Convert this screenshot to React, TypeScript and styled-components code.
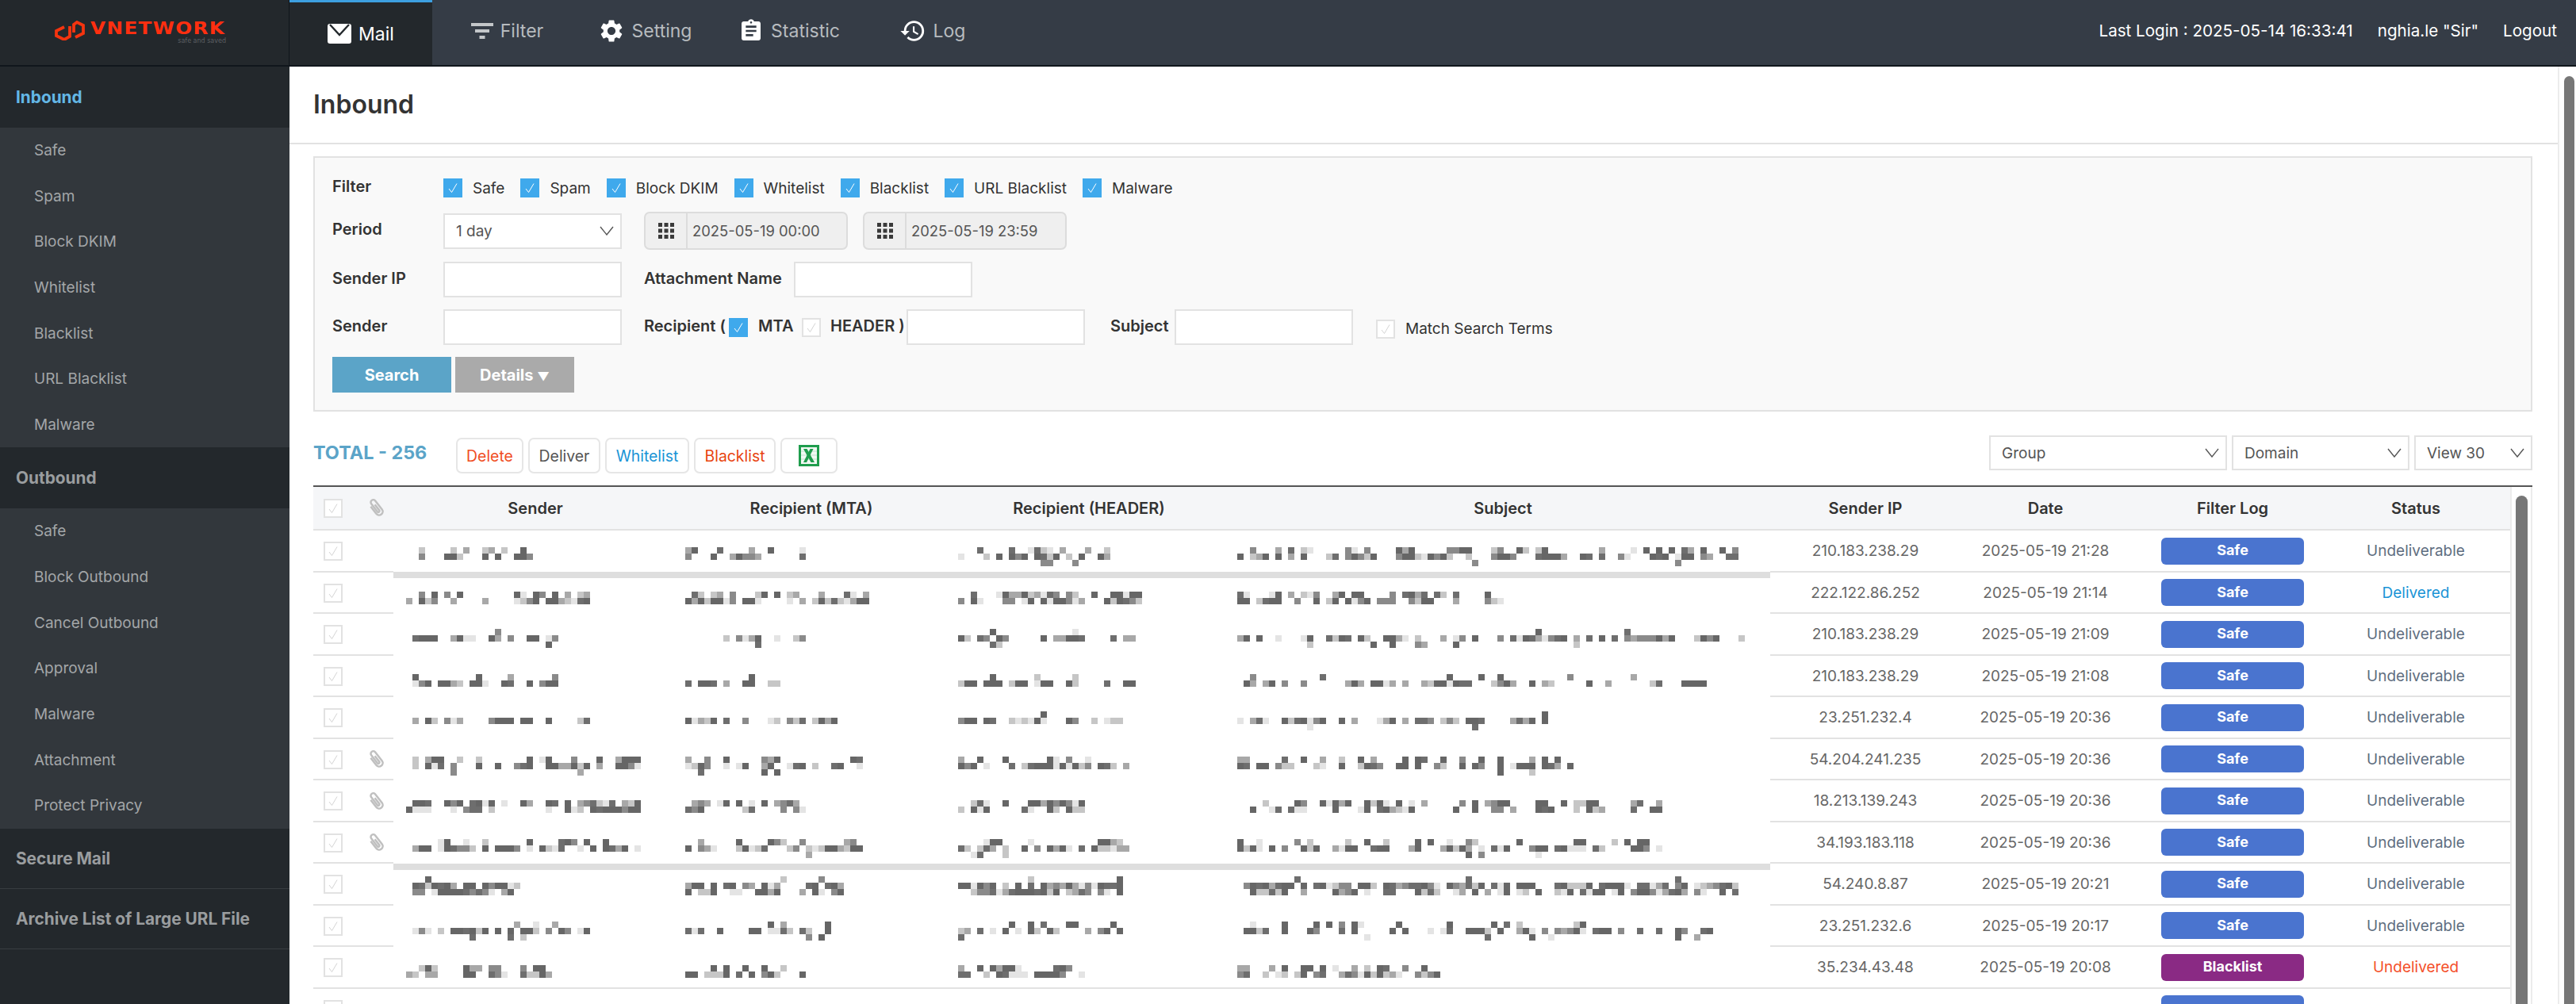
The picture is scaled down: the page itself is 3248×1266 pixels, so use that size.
import React from "react";
import styled, {createGlobalStyle} from "styled-components";
import {MdAssignment, MdHistory, MdSettings} from "react-icons/md";

const GlobalStyle = createGlobalStyle`
    html, body {
        margin: 0;
        padding: 0;
        background: #ffffff;
    }

    * {
        box-sizing: border-box;
    }

    body {
        font-family: Inter, "Noto Sans", "Liberation Sans", sans-serif;
        font-size: 20px;
        color: #333333;
    }
`;

const SPage = styled.div`
    width: 3248px;
    height: 1266px;
    overflow: hidden;
    display: flex;
    flex-direction: column;
`;

const STopBar = styled.header`
    height: 84px;
    flex: none;
    display: flex;
    background: #353c46;
    border-bottom: 2px solid #10161c;
`;

const SLogoCell = styled.div`
    width: 365px;
    flex: none;
    background: #23282c;
    border-right: 1px solid #10161c;
    display: flex;
    align-items: flex-start;
    padding: 26px 0 0 69px;
    gap: 7px;
`;

const SLogoText = styled.div`
    width: 171px;
    flex: none;
    display: flex;
    flex-direction: column;
    align-items: flex-end;
`;

const SLogoName = styled.span`
    align-self: flex-start;
    font-family: "DejaVu Sans", sans-serif;
    font-weight: 700;
    font-size: 21px;
    line-height: 21px;
    letter-spacing: 1.2px;
    color: #ff2f10;
    transform: scaleX(1.17);
    transform-origin: left center;
`;

const SLogoSlogan = styled.span`
    font-family: "DejaVu Sans", sans-serif;
    font-size: 8px;
    line-height: 9px;
    color: #5d6064;
`;

const STab = styled.div<{$active?: boolean, $width: number}>`
    width: ${(props) => props.$width}px;
    flex: none;
    display: flex;
    align-items: center;
    justify-content: center;
    gap: 9px;
    font-size: 23px;
    color: ${(props) => props.$active ? "#ffffff" : "#b7bbbf"};
    background: ${(props) => props.$active ? "#23282c" : "transparent"};
    border-top: 3px solid ${(props) => props.$active ? "#3d9fe0" : "transparent"};
    padding-bottom: ${(props) => props.$active ? "0" : "8px"};
`;

const SUserBar = styled.div`
    margin-left: auto;
    display: flex;
    align-items: center;
    gap: 31px;
    padding: 0 24px 6px 0;
    font-size: 20.6px;
    color: #ffffff;
`;

const SBody = styled.div`
    flex: 1;
    display: flex;
    min-height: 0;
`;

const SSidebar = styled.aside`
    width: 365px;
    flex: none;
    background: #23282c;
    display: flex;
    flex-direction: column;
`;

const SSideHead = styled.div<{$active?: boolean, $line?: boolean}>`
    height: ${(props) => props.$line ? "76px" : "76.5px"};
    flex: none;
    display: flex;
    align-items: center;
    padding-left: 20px;
    font-size: 20.8px;
    font-weight: 700;
    color: ${(props) => props.$active ? "#63b7e6" : "#9a9d9f"};
    border-bottom: ${(props) => props.$line ? "1px solid #383d41" : "none"};
`;

const SSideList = styled.div`
    background: #32373c;
    display: flex;
    flex-direction: column;
`;

const SSideItem = styled.div`
    height: 57.7px;
    display: flex;
    align-items: center;
    padding: 0 0 0 43px;
    font-size: 19px;
    color: #a3a6a8;
`;

const SMain = styled.main`
    flex: 1;
    min-width: 0;
    display: flex;
    flex-direction: column;
`;

const STitleBar = styled.div`
    height: 98px;
    flex: none;
    display: flex;
    align-items: center;
    padding: 0 0 1px 30px;
    border-bottom: 2px solid #e2e2e2;
`;

const STitle = styled.h1`
    margin: 0;
    font-size: 32px;
    font-weight: 600;
    color: #333333;
`;

const SContent = styled.div`
    flex: 1;
    min-height: 0;
    padding: 15px 32px 0 30px;
    display: flex;
    flex-direction: column;
`;

const SFilterPanel = styled.section`
    height: 322px;
    flex: none;
    background: #f9f9f9;
    border: 2px solid #e2e2e2;
    padding: 26px 22px 0 22px;
    display: flex;
    flex-direction: column;
`;

const SFormRow = styled.div<{$height: number, $gap: number}>`
    height: ${(props) => props.$height}px;
    margin-bottom: ${(props) => props.$gap}px;
    display: flex;
    align-items: center;
`;

const SRowLabel = styled.span`
    width: 140px;
    flex: none;
    font-weight: 600;
    font-size: 20px;
    padding-bottom: 4px;
`;

const SInlineLabel = styled.span<{$width: number, $left: number}>`
    width: ${(props) => props.$width}px;
    margin-left: ${(props) => props.$left}px;
    flex: none;
    font-weight: 600;
    font-size: 20px;
    white-space: nowrap;
    padding-bottom: 4px;
`;

const SCheckGroup = styled.div`
    display: flex;
    align-items: center;
    gap: 20px;
`;

const SCheckItem = styled.label`
    display: flex;
    align-items: center;
    gap: 13px;
    font-size: 19px;
    white-space: nowrap;
`;

const SMatchItem = styled(SCheckItem)`
    margin: 4px 0 0 29px;
`;

const SBox = styled.span<{$on?: boolean}>`
    width: 24px;
    height: 24px;
    flex: none;
    display: flex;
    align-items: center;
    justify-content: center;
    background: ${(props) => props.$on ? "#3fa9ec" : "#ffffff"};
    border: ${(props) => props.$on ? "none" : "2px solid #e2e2e2"};
`;

const SSelect = styled.div<{$width: number, $height?: number}>`
    width: ${(props) => props.$width}px;
    height: ${(props) => props.$height || 45}px;
    flex: none;
    display: flex;
    align-items: center;
    justify-content: space-between;
    padding: 0 8px 0 14px;
    background: #ffffff;
    border: 2px solid #e2e2e2;
    font-size: 19px;
    color: #555555;
`;

const SDateGroup = styled.div<{$gap: number}>`
    width: 257px;
    height: 48px;
    flex: none;
    margin-left: ${(props) => props.$gap}px;
    display: flex;
    background: #efefef;
    border: 2px solid #dcdcdc;
    border-radius: 7px;
`;

const SDateIcon = styled.span`
    width: 53px;
    flex: none;
    display: flex;
    align-items: center;
    justify-content: center;
    border-right: 2px solid #dcdcdc;
`;

const SDateText = styled.span`
    display: flex;
    align-items: center;
    padding-left: 6px;
    font-size: 18.4px;
    color: #555555;
`;

const STextInput = styled.input`
    width: 225px;
    height: 45px;
    flex: none;
    background: #ffffff;
    border: 2px solid #e2e2e2;
    border-radius: 0;
    outline: none;
`;

const SActionButton = styled.button<{$color: string}>`
    width: 150px;
    height: 45px;
    border: none;
    margin-right: 5px;
    background: ${(props) => props.$color};
    color: #ffffff;
    font-family: inherit;
    font-size: 20px;
    font-weight: 700;
`;

const SArrow = styled.span`
    font-size: 15px;
`;

const SToolbar = styled.div`
    height: 48px;
    flex: none;
    margin: 30px 0 15px;
    display: flex;
    align-items: flex-start;
`;

const STotal = styled.span`
    width: 180px;
    flex: none;
    padding-top: 6px;
    font-size: 23.4px;
    line-height: 32px;
    font-weight: 700;
    color: #5ba4c8;
`;

const SToolButton = styled.button<{$color: string, $width: number}>`
    width: ${(props) => props.$width}px;
    height: 45px;
    flex: none;
    margin: 3px 6px 0 0;
    display: flex;
    align-items: center;
    justify-content: center;
    padding: 0;
    background: #ffffff;
    border: 2px solid #e6e6e6;
    border-radius: 7px;
    color: ${(props) => props.$color};
    font-family: inherit;
    font-size: 19.4px;
`;

const SToolRight = styled.div`
    margin-left: auto;
    display: flex;
    gap: 6px;
`;

const STable = styled.div`
    flex: 1;
    min-height: 0;
    display: flex;
    border-top: 2px solid #555555;
`;

const STableBody = styled.div`
    flex: 1;
    min-width: 0;
`;

const COLUMNS = "56px 58px 332px 364px 336px 708px 206px 248px 224px 238px";

const SHeadRow = styled.div`
    height: 55px;
    display: grid;
    grid-template-columns: ${COLUMNS};
    background: #f5f6f8;
    border-bottom: 2px solid #e2e2e2;
`;

const SHeadCell = styled.div`
    display: flex;
    align-items: center;
    justify-content: center;
    font-size: 20px;
    font-weight: 600;
    color: #333333;
`;

const SCheckCell = styled.div`
    display: flex;
    align-items: center;
    justify-content: flex-end;
    padding-right: 19px;
`;

const SClipCell = styled.div`
    display: flex;
    align-items: center;
    padding-left: 11px;
`;

const SRow = styled.div<{$full?: boolean}>`
    position: relative;
    height: 52.5px;
    display: grid;
    grid-template-columns: ${COLUMNS};
    background: ${(props) => props.$full
        ? "linear-gradient(#e2e2e2, #e2e2e2) left bottom / 100% 2px no-repeat"
        : "linear-gradient(#e2e2e2, #e2e2e2) left bottom / 101px 2px no-repeat, linear-gradient(#e2e2e2, #e2e2e2) right bottom / 933px 2px no-repeat"};
`;

const SStrip = styled.div`
    position: absolute;
    left: 101px;
    top: 100%;
    width: 1736px;
    height: 8px;
    margin-top: -0.5px;
    background: #dedede;
    z-index: 1;
`;

const SCell = styled.div`
    display: flex;
    align-items: center;
    justify-content: center;
    padding-bottom: 1px;
    font-size: 19px;
    color: #666666;
`;

const SBlurCell = styled.div`
    min-width: 0;
    overflow: hidden;
`;

const SBlur = styled.svg<{$left: number, $top: number}>`
    display: block;
    margin: ${(props) => props.$top}px 0 0 ${(props) => props.$left}px;
`;

const SBadge = styled.span<{$color: string}>`
    width: 180px;
    height: 34px;
    display: flex;
    align-items: center;
    justify-content: center;
    padding-bottom: 2px;
    border-radius: 6px;
    background: ${(props) => props.$color};
    color: #ffffff;
    font-size: 18px;
    font-weight: 700;
`;

const SStatus = styled.span<{$color: string}>`
    color: ${(props) => props.$color};
`;

const STableScroll = styled.div`
    width: 28px;
    flex: none;
    display: flex;
    justify-content: center;
    padding-top: 11px;
    border-left: 2px solid #ececec;
    border-right: 2px solid #ececec;
`;

const SScrollThumb = styled.div`
    width: 15px;
    height: 1400px;
    background: #777777;
    border-radius: 8px;
`;

const SPageScroll = styled.div`
    width: 23px;
    flex: none;
    display: flex;
    padding: 12px 2px 0 6px;
    border-left: 2px solid #ececec;
`;

const CheckMark = ({on}: {on?: boolean}) => (
    <svg width="14" height="14" viewBox="0 0 14 14" fill="none">
        <path d="M2 8 L5.5 12.5 L12 1.5" stroke={on ? "#ffffff" : "#d4d4d4"} strokeWidth="1"/>
    </svg>
);

const CheckBox = ({on}: {on?: boolean}) => (
    <SBox $on={on}><CheckMark on={on}/></SBox>
);

const Chevron = () => (
    <svg width="18" height="12" viewBox="0 0 18 12" fill="none">
        <path d="M1 1 L9 11 L17 1" stroke="#555555" strokeWidth="1.4"/>
    </svg>
);

const GridIcon = () => (
    <svg width="20" height="20" viewBox="0 0 20 20" fill="#3a3a3a">
        {[0, 7.5, 15].flatMap((y) => [0, 7.5, 15].map((x) => (
            <rect key={`${x}-${y}`} x={x} y={y} width="5" height="5"/>
        )))}
    </svg>
);

const MailIcon = () => (
    <svg width="30" height="25" viewBox="0 0 30 25">
        <rect width="30" height="25" rx="3" fill="#ffffff"/>
        <path d="M3 1 L15 14 L27 1" fill="none" stroke="#23282c" strokeWidth="2.4"/>
    </svg>
);

const FilterIcon = () => (
    <svg width="28" height="20" viewBox="0 0 28 20" fill="#c3c6c9">
        <rect width="28" height="4"/>
        <rect x="5" y="8" width="18" height="4"/>
        <rect x="10.5" y="16" width="7" height="4"/>
    </svg>
);

const ClipIcon = () => (
    <svg width="25" height="25" viewBox="1 1 22 22" fill="none">
        <path
            d="M8 7 V17 a4 4 0 0 0 8 0 V5 a2.8 2.8 0 0 0 -5.6 0 V16 a1.3 1.3 0 0 0 2.6 0 V8"
            stroke="#c0c0c0"
            strokeWidth="2.2"
            transform="rotate(-38 12 12)"
        />
    </svg>
);

const ExcelIcon = () => (
    <svg width="26" height="27" viewBox="0 0 26 27">
        <rect width="26" height="27" fill="#1f9d4d"/>
        <rect x="3" y="3" width="20" height="21" fill="#f1f8f3"/>
        <path d="M3 8 H23 M3 13 H23 M3 18 H23" stroke="#bfe3cb" strokeWidth="1"/>
        <path d="M6 5 H10.5 L20 22 H15.5 Z" fill="#1f9d4d"/>
        <path d="M18.5 5 H14.5 L6 22 H10 Z" fill="#1f9d4d"/>
    </svg>
);

const LogoIcon = () => (
    <svg width="38" height="25" viewBox="0 0 38 25" fill="none" stroke="#f5340f" strokeWidth="3.8">
        <path d="M12 8 L2 13 V19 L12 24 L19 20 V7"/>
        <path d="M24 15 V5 L28 2 L36 6 V16 L26 21"/>
    </svg>
);

// 가려진 텍스트: 8px 칸 모자이크
const MOSAIC_COLORS = ["#666666", "#666666", "#666666", "#6e6e6e", "#8a8a8a", "#a8a8a8", "#c6c6c6", "#e4e4e4"];

const makeRandom = (seed: number) => {
    let value = seed * 2654435761 % 4294967296;
    return () => {
        value = (value * 1664525 + 1013904223) % 4294967296;
        return value / 4294967296;
    };
};

interface MosaicProps {
    from: number,
    to: number,
    colStart: number,
    top: number,
    density: number[],
    seed: number,
}

const Mosaic = ({from, to, colStart, top, density, seed}: MosaicProps) => {
    const random = makeRandom(seed);
    const count = Math.round((to - from) / 8);
    const rects = [];
    for (let col = 0; col < count; col++) {
        const gap = random() < 0.16;
        for (let band = 0; band < 3; band++) {
            const chance = gap ? density[band] * 0.25 : density[band];
            const edge = band === 1 && (col === 0 || col === count - 1);
            if (random() < chance || edge) {
                const color = MOSAIC_COLORS[Math.floor(random() * MOSAIC_COLORS.length)];
                rects.push(<rect key={`${col}-${band}`} x={col * 8} y={band * 8} width="8" height="8" fill={color}/>);
            }
        }
    }
    return (
        <SBlur $left={from - colStart} $top={top} width={count * 8} height="24" shapeRendering="crispEdges">
            {rects}
        </SBlur>
    );
};

type Filter = "Safe" | "Blacklist";

interface MailRow {
    top: number,
    density: number[],
    sender: number[],
    mta: number[],
    headerEnd: number,
    subject: number[],
    ip: string,
    date: string,
    filter: Filter,
    status: "Undeliverable" | "Delivered" | "Undelivered",
    clip?: boolean,
    strip?: boolean,
    full?: boolean,
}

const ROWS: MailRow[] = [
    {top: 21, density: [.45, .6, .08], sender: [528, 672], mta: [864, 1016], headerEnd: 1400, subject: [1560, 2192], ip: "210.183.238.29", date: "2025-05-19 21:28", filter: "Safe", status: "Undeliverable", strip: true},
    {top: 24, density: [.6, .65, 0], sender: [512, 744], mta: [864, 1096], headerEnd: 1440, subject: [1560, 1896], ip: "222.122.86.252", date: "2025-05-19 21:14", filter: "Safe", status: "Delivered"},
    {top: 19, density: [.04, .6, .06], sender: [520, 704], mta: [912, 1016], headerEnd: 1432, subject: [1560, 2200], ip: "210.183.238.29", date: "2025-05-19 21:09", filter: "Safe", status: "Undeliverable"},
    {top: 23, density: [.12, .6, 0], sender: [520, 704], mta: [864, 984], headerEnd: 1432, subject: [1568, 2152], ip: "210.183.238.29", date: "2025-05-19 21:08", filter: "Safe", status: "Undeliverable"},
    {top: 18, density: [.03, .65, .04], sender: [520, 744], mta: [864, 1056], headerEnd: 1416, subject: [1560, 1952], ip: "23.251.232.4", date: "2025-05-19 20:36", filter: "Safe", status: "Undeliverable"},
    {top: 22, density: [.35, .65, .05], sender: [520, 808], mta: [864, 1088], headerEnd: 1424, subject: [1560, 1984], ip: "54.204.241.235", date: "2025-05-19 20:36", filter: "Safe", status: "Undeliverable", clip: true},
    {top: 25, density: [.65, .6, 0], sender: [512, 808], mta: [864, 1016], headerEnd: 1368, subject: [1576, 2096], ip: "18.213.139.243", date: "2025-05-19 20:36", filter: "Safe", status: "Undeliverable", clip: true},
    {top: 21, density: [.35, .65, .05], sender: [520, 808], mta: [864, 1088], headerEnd: 1424, subject: [1560, 2096], ip: "34.193.183.118", date: "2025-05-19 20:36", filter: "Safe", status: "Undeliverable", clip: true, strip: true},
    {top: 16, density: [.02, .8, .75], sender: [520, 656], mta: [864, 1064], headerEnd: 1416, subject: [1568, 2192], ip: "54.240.8.87", date: "2025-05-19 20:21", filter: "Safe", status: "Undeliverable"},
    {top: 20, density: [.2, .55, .08], sender: [520, 744], mta: [864, 1048], headerEnd: 1416, subject: [1568, 2160], ip: "23.251.232.6", date: "2025-05-19 20:17", filter: "Safe", status: "Undeliverable"},
    {top: 23, density: [.55, .7, 0], sender: [512, 696], mta: [864, 1016], headerEnd: 1368, subject: [1560, 1816], ip: "35.234.43.48", date: "2025-05-19 20:08", filter: "Blacklist", status: "Undelivered", full: true},
];

const STATUS_COLOR = {Undeliverable: "#5f6e80", Delivered: "#1a94d6", Undelivered: "#f4502a"};
const BADGE_COLOR = {Safe: "#4a74cf", Blacklist: "#8a2a84"};

const INBOUND = ["Safe", "Spam", "Block DKIM", "Whitelist", "Blacklist", "URL Blacklist", "Malware"];
const OUTBOUND = ["Safe", "Block Outbound", "Cancel Outbound", "Approval", "Malware", "Attachment", "Protect Privacy"];

const App = () => (
    <SPage>
        <GlobalStyle/>
        <STopBar>
            <SLogoCell>
                <LogoIcon/>
                <SLogoText>
                    <SLogoName>VNETWORK</SLogoName>
                    <SLogoSlogan>safe and saved</SLogoSlogan>
                </SLogoText>
            </SLogoCell>
            <STab $active $width={180}><MailIcon/>Mail</STab>
            <STab $width={189}><FilterIcon/>Filter</STab>
            <STab $width={158}><MdSettings size={34} color="#ffffff"/>Setting</STab>
            <STab $width={206}><MdAssignment size={32} color="#ffffff"/>Statistic</STab>
            <STab $width={155}><MdHistory size={34} color="#ffffff"/>Log</STab>
            <SUserBar>
                <span>Last Login : 2025-05-14 16:33:41</span>
                <span>nghia.le "Sir"</span>
                <span>Logout</span>
            </SUserBar>
        </STopBar>
        <SBody>
            <SSidebar>
                <SSideHead $active>Inbound</SSideHead>
                <SSideList>
                    {INBOUND.map((item) => <SSideItem key={item}>{item}</SSideItem>)}
                </SSideList>
                <SSideHead>Outbound</SSideHead>
                <SSideList>
                    {OUTBOUND.map((item) => <SSideItem key={item}>{item}</SSideItem>)}
                </SSideList>
                <SSideHead $line>Secure Mail</SSideHead>
                <SSideHead $line>Archive List of Large URL File</SSideHead>
            </SSidebar>
            <SMain>
                <STitleBar><STitle>Inbound</STitle></STitleBar>
                <SContent>
                    <SFilterPanel>
                        <SFormRow $height={24} $gap={18}>
                            <SRowLabel>Filter</SRowLabel>
                            <SCheckGroup>
                                {INBOUND.map((item) => (
                                    <SCheckItem key={item}><CheckBox on/>{item}</SCheckItem>
                                ))}
                            </SCheckGroup>
                        </SFormRow>
                        <SFormRow $height={48} $gap={15}>
                            <SRowLabel>Period</SRowLabel>
                            <SSelect $width={225}>1 day<Chevron/></SSelect>
                            <SDateGroup $gap={28}>
                                <SDateIcon><GridIcon/></SDateIcon>
                                <SDateText>2025-05-19 00:00</SDateText>
                            </SDateGroup>
                            <SDateGroup $gap={19}>
                                <SDateIcon><GridIcon/></SDateIcon>
                                <SDateText>2025-05-19 23:59</SDateText>
                            </SDateGroup>
                        </SFormRow>
                        <SFormRow $height={45} $gap={15}>
                            <SRowLabel>Sender IP</SRowLabel>
                            <STextInput/>
                            <SInlineLabel $width={189} $left={28}>Attachment Name</SInlineLabel>
                            <STextInput/>
                        </SFormRow>
                        <SFormRow $height={45} $gap={15}>
                            <SRowLabel>Sender</SRowLabel>
                            <STextInput/>
                            <SInlineLabel $width={107} $left={28}>Recipient (</SInlineLabel>
                            <CheckBox on/>
                            <SInlineLabel $width={55} $left={13}>MTA</SInlineLabel>
                            <CheckBox/>
                            <SInlineLabel $width={96} $left={12}>HEADER )</SInlineLabel>
                            <STextInput/>
                            <SInlineLabel $width={81} $left={32}>Subject</SInlineLabel>
                            <STextInput/>
                            <SMatchItem><CheckBox/>Match Search Terms</SMatchItem>
                        </SFormRow>
                        <SFormRow $height={45} $gap={0}>
                            <SActionButton $color="#5ba4c8">Search</SActionButton>
                            <SActionButton $color="#aaaaaa">Details <SArrow>▼</SArrow></SActionButton>
                        </SFormRow>
                    </SFilterPanel>
                    <SToolbar>
                        <STotal>TOTAL - 256</STotal>
                        <SToolButton $color="#f04e23" $width={85}>Delete</SToolButton>
                        <SToolButton $color="#555555" $width={91}>Deliver</SToolButton>
                        <SToolButton $color="#1a94d6" $width={106}>Whitelist</SToolButton>
                        <SToolButton $color="#e8440f" $width={103}>Blacklist</SToolButton>
                        <SToolButton $color="#555555" $width={72}><ExcelIcon/></SToolButton>
                        <SToolRight>
                            <SSelect $width={300} $height={44}>Group<Chevron/></SSelect>
                            <SSelect $width={224} $height={44}>Domain<Chevron/></SSelect>
                            <SSelect $width={149} $height={44}>View 30<Chevron/></SSelect>
                        </SToolRight>
                    </SToolbar>
                    <STable>
                        <STableBody>
                            <SHeadRow>
                                <SCheckCell><CheckBox/></SCheckCell>
                                <SClipCell><ClipIcon/></SClipCell>
                                <SHeadCell>Sender</SHeadCell>
                                <SHeadCell>Recipient (MTA)</SHeadCell>
                                <SHeadCell>Recipient (HEADER)</SHeadCell>
                                <SHeadCell>Subject</SHeadCell>
                                <SHeadCell>Sender IP</SHeadCell>
                                <SHeadCell>Date</SHeadCell>
                                <SHeadCell>Filter Log</SHeadCell>
                                <SHeadCell>Status</SHeadCell>
                            </SHeadRow>
                            {ROWS.map((row, index) => (
                                <SRow key={index} $full={row.full}>
                                    <SCheckCell><CheckBox/></SCheckCell>
                                    <SClipCell>{row.clip && <ClipIcon/>}</SClipCell>
                                    <SBlurCell>
                                        <Mosaic from={row.sender[0]} to={row.sender[1]} colStart={509} top={row.top} density={row.density} seed={index * 4 + 1}/>
                                    </SBlurCell>
                                    <SBlurCell>
                                        <Mosaic from={row.mta[0]} to={row.mta[1]} colStart={841} top={row.top} density={row.density} seed={index * 4 + 2}/>
                                    </SBlurCell>
                                    <SBlurCell>
                                        <Mosaic from={1208} to={row.headerEnd} colStart={1205} top={row.top} density={row.density} seed={index * 4 + 3}/>
                                    </SBlurCell>
                                    <SBlurCell>
                                        <Mosaic from={row.subject[0]} to={row.subject[1]} colStart={1541} top={row.top} density={row.density} seed={index * 4 + 4}/>
                                    </SBlurCell>
                                    <SCell>{row.ip}</SCell>
                                    <SCell>{row.date}</SCell>
                                    <SCell><SBadge $color={BADGE_COLOR[row.filter]}>{row.filter}</SBadge></SCell>
                                    <SCell><SStatus $color={STATUS_COLOR[row.status]}>{row.status}</SStatus></SCell>
                                    {row.strip && <SStrip/>}
                                </SRow>
                            ))}
                            <SRow $full>
                                <SCheckCell><CheckBox/></SCheckCell>
                                <SClipCell/>
                                <SBlurCell/>
                                <SBlurCell/>
                                <SBlurCell/>
                                <SBlurCell/>
                                <SCell/>
                                <SCell/>
                                <SCell><SBadge $color={BADGE_COLOR.Safe}/></SCell>
                                <SCell/>
                            </SRow>
                        </STableBody>
                        <STableScroll><SScrollThumb/></STableScroll>
                    </STable>
                </SContent>
            </SMain>
            <SPageScroll><SScrollThumb/></SPageScroll>
        </SBody>
    </SPage>
);

export default App;
